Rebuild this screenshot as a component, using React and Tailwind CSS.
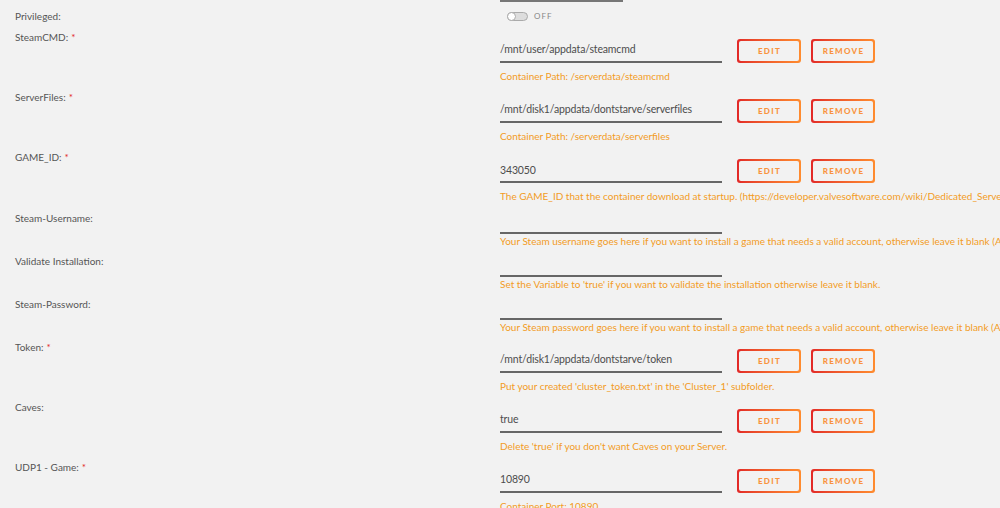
import React from "react";

const rows = [
  {
    label: "SteamCMD:",
    required: true,
    value: "/mnt/user/appdata/steamcmd",
    buttons: true,
    desc: "Container Path: /serverdata/steamcmd",
  },
  {
    label: "ServerFiles:",
    required: true,
    value: "/mnt/disk1/appdata/dontstarve/serverfiles",
    buttons: true,
    desc: "Container Path: /serverdata/serverfiles",
  },
  {
    label: "GAME_ID:",
    required: true,
    value: "343050",
    buttons: true,
    desc: "The GAME_ID that the container download at startup. (https://developer.valvesoftware.com/wiki/Dedicated_Servers_List)",
  },
  {
    label: "Steam-Username:",
    value: "",
    desc: "Your Steam username goes here if you want to install a game that needs a valid account, otherwise leave it blank (ATTENTION: You have to disable Steam Guard)",
  },
  {
    label: "Validate Installation:",
    value: "",
    desc: "Set the Variable to 'true' if you want to validate the installation otherwise leave it blank.",
  },
  {
    label: "Steam-Password:",
    value: "",
    desc: "Your Steam password goes here if you want to install a game that needs a valid account, otherwise leave it blank (ATTENTION: You have to disable Steam Guard)",
  },
  {
    label: "Token:",
    required: true,
    value: "/mnt/disk1/appdata/dontstarve/token",
    buttons: true,
    desc: "Put your created 'cluster_token.txt' in the 'Cluster_1' subfolder.",
  },
  {
    label: "Caves:",
    value: "true",
    buttons: true,
    desc: "Delete 'true' if you don't want Caves on your Server.",
  },
  {
    label: "UDP1 - Game:",
    required: true,
    value: "10890",
    buttons: true,
    desc: "Container Port: 10890",
  },
];

const GradientButton = ({ children }) => (
  <div className="h-[24px] w-[64px] rounded-[3px] bg-linear-to-r from-[#e22828] to-[#ff8c2f] p-[2px]">
    <div className="flex h-full w-full items-center justify-center rounded-[2px] bg-[#f2f2f2] pl-[1px] text-[8px] font-black tracking-[1.3px] text-[#f99440]">
      {children}
    </div>
  </div>
);

const Label = ({ text, required }) => (
  <div className="pl-[15px] text-[10px] leading-[14px] text-[#555]">
    {text}
    {required && <span className="ml-[3px] text-[#e22828]">*</span>}
  </div>
);

const VarRow = ({ row }) => (
  <div className="grid grid-cols-[500px_1fr]">
    <Label text={row.label} required={row.required} />
    <div className="pt-[9px]">
      {row.buttons ? (
        <div className="flex items-center gap-[10px]">
          <div className="mr-[5px] flex h-[24px] w-[222px] items-center border-b-2 border-[#666] text-[10.5px] tracking-[-0.15px] text-[#4d4d4d]">
            {row.value}
          </div>
          <GradientButton>EDIT</GradientButton>
          <GradientButton>REMOVE</GradientButton>
        </div>
      ) : (
        <div className="h-[14px] w-[222px] border-b-2 border-[#666]" />
      )}
      <div
        className={`whitespace-nowrap text-[10px] leading-[14px] text-[#f39c1f] ${
          row.buttons ? "mt-[6px] mb-[7.2px]" : "mb-[6px]"
        }`}
      >
        {row.desc}
      </div>
    </div>
  </div>
);

export default function App() {
  return (
    <div
      className="h-[508px] w-[1000px] overflow-hidden bg-[#f2f2f2]"
      style={{ fontFamily: 'Lato, "Liberation Sans", sans-serif' }}
    >
      <div className="ml-[500px] h-[2px] w-[123px] bg-[#777]" />
      <div className="grid h-[28px] grid-cols-[500px_1fr] pt-[7px]">
        <Label text="Privileged:" />
        <div className="flex h-[14px] items-center gap-[6px] pl-[7px]">
          <div className="relative h-[9px] w-[21px] rounded-full border border-[#aaa] bg-[#ddd]">
            <div className="absolute left-[-1px] top-[-1px] h-[9px] w-[9px] rounded-full border border-[#aaa] bg-white" />
          </div>
          <span className="text-[8px] tracking-[1px] text-[#888]">OFF</span>
        </div>
      </div>
      {rows.map((row) => (
        <VarRow key={row.label} row={row} />
      ))}
    </div>
  );
}
